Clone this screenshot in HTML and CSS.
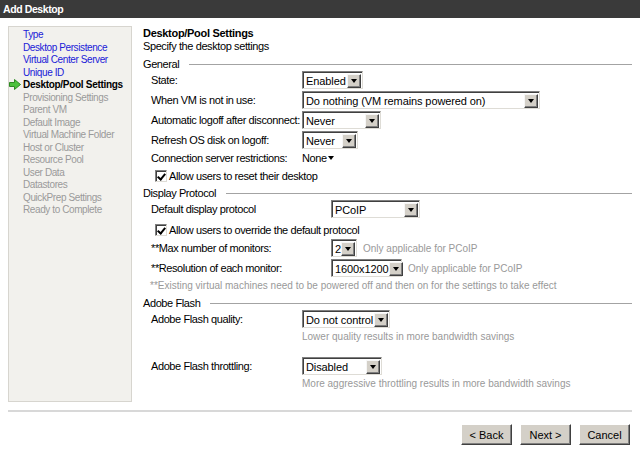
FILE: index.html
```html
<!DOCTYPE html>
<html lang="en">
<head>
    <meta charset="UTF-8">
    <title>Add Desktop</title>
    <link rel="stylesheet" href="styles.css">
</head>
<body>
    <div class="titlebar">Add Desktop</div>

    <div class="wizard">
        <ul class="steps">
            <li class="done">Type</li>
            <li class="done">Desktop Persistence</li>
            <li class="done">Virtual Center Server</li>
            <li class="done">Unique ID</li>
            <li class="current">
                <svg class="arrow" width="12" height="11" viewBox="0 0 12 11">
                    <path d="M0.5 3.5 H5.5 V0.5 L11.5 5.5 L5.5 10.5 V7.5 H0.5 Z" fill="#4cc13c" stroke="#2d8a22" stroke-width="1"/>
                </svg>Desktop/Pool Settings
            </li>
            <li>Provisioning Settings</li>
            <li>Parent VM</li>
            <li>Default Image</li>
            <li>Virtual Machine Folder</li>
            <li>Host or Cluster</li>
            <li>Resource Pool</li>
            <li>User Data</li>
            <li>Datastores</li>
            <li>QuickPrep Settings</li>
            <li>Ready to Complete</li>
        </ul>

        <div class="page">
            <div class="page-title">Desktop/Pool Settings</div>
            <div class="page-desc">Specify the desktop settings</div>

            <!-- General -->
            <div class="section-head">General</div>
            <div class="row">
                <span class="label">State:</span>
                <span class="select w-state"><span class="value">Enabled</span><span class="drop"></span></span>
            </div>
            <div class="row">
                <span class="label">When VM is not in use:</span>
                <span class="select w-idle"><span class="value">Do nothing (VM remains powered on)</span><span class="drop"></span></span>
            </div>
            <div class="row">
                <span class="label">Automatic logoff after disconnect:</span>
                <span class="select w-logoff"><span class="value">Never</span><span class="drop"></span></span>
            </div>
            <div class="row">
                <span class="label">Refresh OS disk on logoff:</span>
                <span class="select w-refresh"><span class="value">Never</span><span class="drop"></span></span>
            </div>
            <div class="row row-short">
                <span class="label">Connection server restrictions:</span>
                <span class="menu">None<span class="caret"></span></span>
            </div>
            <div class="row check-row">
                <span class="checkbox checked"></span>Allow users to reset their desktop
            </div>

            <!-- Display Protocol -->
            <div class="section-head close">Display Protocol</div>
            <div class="row">
                <span class="label wide">Default display protocol</span>
                <span class="select w-protocol"><span class="value">PCoIP</span><span class="drop"></span></span>
            </div>
            <div class="row check-row tight">
                <span class="checkbox checked"></span>Allow users to override the default protocol
            </div>
            <div class="row">
                <span class="label wide">**Max number of monitors:</span>
                <span class="select w-monitors"><span class="value">2</span><span class="drop"></span></span>
                <span class="hint">Only applicable for PCoIP</span>
            </div>
            <div class="row">
                <span class="label wide">**Resolution of each monitor:</span>
                <span class="select w-resolution"><span class="value">1600x1200</span><span class="drop"></span></span>
                <span class="hint">Only applicable for PCoIP</span>
            </div>
            <div class="note">**Existing virtual machines need to be powered off and then on for the settings to take effect</div>

            <!-- Adobe Flash -->
            <div class="section-head after-note">Adobe Flash</div>
            <div class="row">
                <span class="label">Adobe Flash quality:</span>
                <span class="select w-quality"><span class="value">Do not control</span><span class="drop"></span></span>
            </div>
            <div class="note indent">Lower quality results in more bandwidth savings</div>
            <div class="row spaced">
                <span class="label">Adobe Flash throttling:</span>
                <span class="select w-throttle"><span class="value">Disabled</span><span class="drop"></span></span>
            </div>
            <div class="note indent">More aggressive throttling results in more bandwidth savings</div>
        </div>
    </div>

    <div class="footer">
        <button class="btn">&lt; Back</button>
        <button class="btn">Next &gt;</button>
        <button class="btn">Cancel</button>
    </div>
</body>
</html>
```

FILE: styles.css
```css
* {
    box-sizing: border-box;
}

body {
    margin: 0;
    background-color: #fff;
    font-family: "Liberation Sans", Arial, sans-serif;
    font-size: 11px;
    color: #000;
}

.titlebar {
    height: 18px;
    line-height: 18px;
    padding-left: 3px;
    background-color: #3a3a3a;
    color: #fff;
    font-size: 10.5px;
    font-weight: bold;
    letter-spacing: -0.4px;
}

.wizard {
    display: flex;
    padding: 8px 8px 0 8px;
}

/* step list on the left */
.steps {
    width: 124px;
    height: 376px;
    margin: 0;
    padding: 2px 0 0 14px;
    list-style: none;
    background-color: #f2f1ed;
    border: 1px solid #d7d5cf;
    font-size: 10px;
    line-height: 12.5px;
    letter-spacing: -0.4px;
    color: #9a9a9a;
}

.steps .done {
    color: #2020d8;
}

.steps .current {
    color: #000;
    font-weight: bold;
    letter-spacing: -0.3px;
}

.arrow {
    margin-left: -14px;
    margin-right: 2px;
    vertical-align: -2px;
}

/* settings page */
.page {
    width: 489px;
    margin-left: 11px;
    padding-top: 1px;
    letter-spacing: -0.4px;
}

.page-title {
    font-weight: bold;
    line-height: 13px;
    letter-spacing: -0.3px;
}

.page-desc {
    line-height: 13px;
}

.section-head {
    display: flex;
    align-items: center;
    margin-top: 5px;
    line-height: 13px;
}

.section-head.close {
    margin-top: 2px;
}

.section-head.after-note {
    margin-top: 4px;
}

.section-head::after {
    content: "";
    flex: 1;
    height: 1px;
    margin-left: 10px;
    background-color: #a3a3a3;
}

.row {
    display: flex;
    align-items: center;
    height: 20px;
    padding-left: 8px;
    padding-bottom: 2px;
}

.row-short {
    height: 14px;
    padding-bottom: 0;
}

.row.spaced {
    margin-top: 13px;
}

.label {
    width: 151px;
    flex-shrink: 0;
    white-space: nowrap;
}

.label.wide {
    width: 180px;
}

/* drop-down boxes */
.select {
    display: inline-flex;
    align-items: center;
    justify-content: space-between;
    height: 18px;
    padding: 0 1px 0 3px;
    background-color: #fff;
    border: 1px solid;
    border-color: #808080 #dedcd6 #dedcd6 #808080;
    box-shadow: inset 1px 1px 0 #404040;
    font-size: 11px;
    letter-spacing: -0.1px;
    white-space: nowrap;
}

.select .value {
    padding-top: 1px;
}

.drop {
    display: flex;
    align-items: center;
    justify-content: center;
    flex-shrink: 0;
    width: 14px;
    height: 14px;
    margin-top: 1px;
    background-color: #d4d0c8;
    border: 1px solid;
    border-color: #f6f6f6 #404040 #404040 #f6f6f6;
    box-shadow: inset -1px -1px 0 #808080;
}

.drop::after {
    content: "";
    border-left: 3px solid transparent;
    border-right: 3px solid transparent;
    border-top: 4px solid #000;
}

.w-state { width: 61px; }
.w-idle { width: 238px; }
.w-logoff { width: 79px; }
.w-refresh { width: 56px; }
.w-protocol { width: 89px; }
.w-monitors { width: 26px; }
.w-resolution { width: 71px; }
.w-quality { width: 88px; }
.w-throttle { width: 80px; }

.menu {
    display: inline-flex;
    align-items: center;
}

.caret {
    margin-left: 1px;
    border-left: 3px solid transparent;
    border-right: 3px solid transparent;
    border-top: 4px solid #000;
}

.hint {
    margin-left: 6px;
    color: #999;
    font-size: 10px;
    letter-spacing: 0;
}

/* check boxes */
.check-row {
    padding-left: 12px;
    padding-top: 1px;
    padding-bottom: 0;
}

.check-row.tight {
    height: 19px;
}

.checkbox {
    position: relative;
    width: 12px;
    height: 12px;
    margin-right: 2px;
    background-color: #fff;
    border: 1px solid;
    border-color: #808080 #dedcd6 #dedcd6 #808080;
    box-shadow: inset 1px 1px 0 #404040;
}

.checkbox.checked::after {
    content: "";
    position: absolute;
    left: 3px;
    top: 1px;
    width: 3px;
    height: 6px;
    border: solid #000;
    border-width: 0 2px 2px 0;
    transform: rotate(40deg);
}

.note {
    height: 14px;
    line-height: 14px;
    padding-left: 7px;
    color: #999;
    font-size: 10px;
    letter-spacing: 0;
    white-space: nowrap;
}

.note.indent {
    padding-left: 159px;
}

/* bottom buttons */
.footer {
    display: flex;
    justify-content: flex-end;
    gap: 8px;
    margin: 8px 8px 0 8px;
    padding: 12px 2px 0 0;
    border-top: 2px solid #d8d8d8;
}

.btn {
    width: 51px;
    height: 21px;
    padding: 0;
    background-color: #d4d0c8;
    border: 1px solid;
    border-color: #fff #404040 #404040 #fff;
    box-shadow: inset -1px -1px 0 #808080;
    font-family: "Liberation Sans", Arial, sans-serif;
    font-size: 11px;
    color: #000;
    cursor: pointer;
}
```
